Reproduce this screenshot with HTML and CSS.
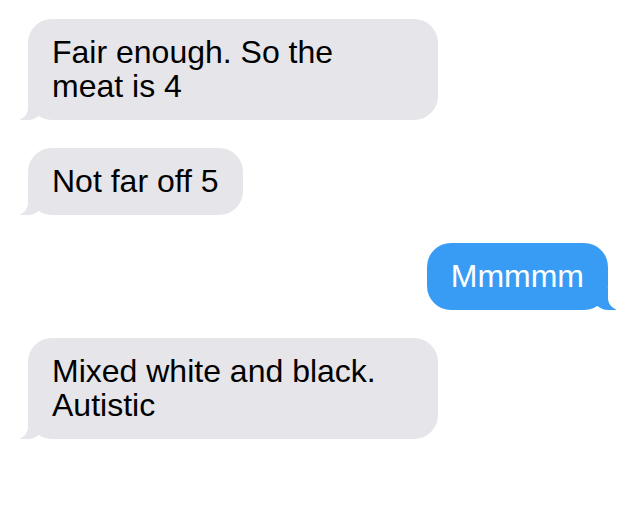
FILE: index.html
```html
<!DOCTYPE html>
<html lang="en">
<head>
<meta charset="UTF-8">
<meta name="viewport" content="width=device-width, initial-scale=1.0">
<title>Messages</title>
<link rel="stylesheet" href="styles.css">
</head>
<body>
<main class="thread">
  <div class="bubble in wide">Fair enough. So the<br>meat is 4</div>
  <div class="bubble in">Not far off 5</div>
  <div class="bubble out">Mmmmm</div>
  <div class="bubble in wide">Mixed white and black.<br>Autistic</div>
</main>
</body>
</html>
```

FILE: styles.css
```css
body {
  margin: 0;
  background: #fff;
  font-family: "Liberation Sans", Arial, sans-serif;
}
.thread {
  display: flex;
  flex-direction: column;
  align-items: flex-start;
  gap: 28px;
  padding: 19px 26px 0 28px;
}
.bubble {
  position: relative;
  box-sizing: border-box;
  max-width: 410px;
  padding: 16px 24px 17px;
  border-radius: 24px;
  font-size: 32px;
  line-height: 34px;
}
.wide {
  width: 410px;
}
.in {
  background: #e5e5ea;
  color: #000;
}
.out {
  align-self: flex-end;
  background: #389cf4;
  color: #fff;
}
/* tails */
.bubble::before,
.bubble::after {
  content: "";
  position: absolute;
  bottom: 0;
  height: 22px;
}
.in::before {
  left: -8px;
  width: 24px;
  background: #e5e5ea;
  border-bottom-right-radius: 16px;
}
.in::after {
  left: -12px;
  width: 12px;
  background: #fff;
  border-bottom-right-radius: 12px;
}
.out::before {
  right: -8px;
  width: 24px;
  background: #389cf4;
  border-bottom-left-radius: 16px;
}
.out::after {
  right: -12px;
  width: 12px;
  background: #fff;
  border-bottom-left-radius: 12px;
}
```
